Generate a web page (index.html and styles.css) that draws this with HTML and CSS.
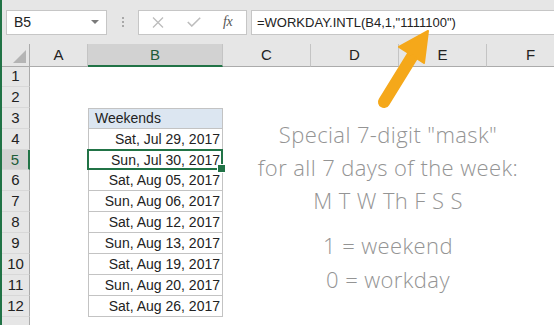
FILE: index.html
```html
<!DOCTYPE html>
<html>
<head>
<meta charset="utf-8">
<link rel="stylesheet" href="styles.css">
</head>
<body>
<div class="app">
  <div class="toolbar">
    <div class="namebox"><span>B5</span><span class="caret"></span></div>
    <div class="grip"><i></i><i></i><i></i></div>
    <div class="fxbox">
      <svg class="ico-x" width="12" height="11" viewBox="0 0 12 11"><path d="M1 0.5 L11 10.5 M11 0.5 L1 10.5" stroke="#bdbdbd" stroke-width="1.3" fill="none"/></svg>
      <svg class="ico-ok" width="14" height="10" viewBox="0 0 14 10"><path d="M0.8 5 L4.8 9 L13.2 0.8" stroke="#bdbdbd" stroke-width="1.6" fill="none"/></svg>
      <span class="fx">fx</span>
    </div>
    <div class="formula">=WORKDAY.INTL(B4,1,"1111100")</div>
  </div>
  <div class="hdr">
    <div class="corner"><span class="tri"></span></div>
    <div class="ch">A</div>
    <div class="ch sel">B</div>
    <div class="ch">C</div>
    <div class="ch">D</div>
    <div class="ch">E</div>
    <div class="ch">F</div>
  </div>
  <div class="sheet">
    <div class="rh">1</div><div></div><div></div><div></div><div></div><div></div><div></div>
    <div class="rh">2</div><div></div><div></div><div></div><div></div><div></div><div></div>
    <div class="rh">3</div><div></div><div class="c th">Weekends</div><div></div><div></div><div></div><div></div>
    <div class="rh">4</div><div></div><div class="c">Sat, Jul 29, 2017</div><div></div><div></div><div></div><div></div>
    <div class="rh sel">5</div><div></div><div class="c active">Sun, Jul 30, 2017</div><div></div><div></div><div></div><div></div>
    <div class="rh">6</div><div></div><div class="c">Sat, Aug 05, 2017</div><div></div><div></div><div></div><div></div>
    <div class="rh">7</div><div></div><div class="c">Sun, Aug 06, 2017</div><div></div><div></div><div></div><div></div>
    <div class="rh">8</div><div></div><div class="c">Sat, Aug 12, 2017</div><div></div><div></div><div></div><div></div>
    <div class="rh">9</div><div></div><div class="c">Sun, Aug 13, 2017</div><div></div><div></div><div></div><div></div>
    <div class="rh">10</div><div></div><div class="c">Sat, Aug 19, 2017</div><div></div><div></div><div></div><div></div>
    <div class="rh">11</div><div></div><div class="c">Sun, Aug 20, 2017</div><div></div><div></div><div></div><div></div>
    <div class="rh">12</div><div></div><div class="c">Sat, Aug 26, 2017</div><div></div><div></div><div></div><div></div>
    <div class="rh last"></div><div></div><div></div><div></div><div></div><div></div><div></div>
  </div>
  <div class="note">
    <p class="block1">Special 7-digit "mask"<br>for all 7 days of the week:<br>M T W Th F S S</p>
    <p class="block2">1 = weekend<br>0 = workday</p>
  </div>
  <svg class="arrow" width="554" height="325" viewBox="0 0 554 325">
    <line x1="384" y1="102" x2="413" y2="55" stroke="#f5a81a" stroke-width="12" stroke-linecap="round"/>
    <polygon points="428,31 399,47 424,63" fill="#f5a81a" stroke="#f5a81a" stroke-width="2" stroke-linejoin="round"/>
  </svg>
</div>
</body>
</html>
```
FILE: styles.css
```css
* { box-sizing: border-box; margin: 0; padding: 0; }
html, body { width: 554px; height: 325px; overflow: hidden; background: #fff; }
body { font-family: "Liberation Sans", Arial, sans-serif; color: #222; }

.app { position: relative; height: 325px; border-left: 2px solid #217346; overflow: hidden; }

.toolbar { height: 44px; background: #e6e6e6; display: flex; align-items: center; padding-left: 4px; }
.namebox { width: 101px; height: 25px; background: #fff; border: 1px solid #c6c6c6; display: flex; align-items: center; justify-content: space-between; padding: 0 7px 0 7px; font-size: 14px; }
.caret { width: 0; height: 0; border-left: 4px solid transparent; border-right: 4px solid transparent; border-top: 4px solid #7a7a7a; }
.grip { width: 31px; display: flex; flex-direction: column; align-items: center; gap: 2px; }
.grip i { width: 2px; height: 2px; background: #a8a8a8; }
.fxbox { width: 109px; height: 25px; background: #fff; border: 1px solid #c6c6c6; display: flex; align-items: center; }
.ico-x { margin-left: 13px; }
.ico-ok { margin-left: 23px; }
.fx { margin-left: 22px; font-family: "Liberation Serif", serif; font-style: italic; font-size: 14px; color: #555; letter-spacing: -0.5px; }
.formula { margin-left: 4px; flex: 1; height: 25px; background: #fff; border: 1px solid #c6c6c6; border-right: 0; padding-left: 5px; font-size: 13px; line-height: 23px; white-space: nowrap; }

.hdr { display: grid; grid-template-columns: 28px 58px 135px 88px 88px 88px 88px; height: 22px; background: #e6e6e6; }
.corner, .ch { border-bottom: 1px solid #ababab; border-right: 1px solid #c4c4c4; }
.corner { position: relative; border-right-color: #ababab; }
.tri { position: absolute; right: 3px; bottom: 3px; width: 0; height: 0; border-left: 13px solid transparent; border-bottom: 13px solid #b4b4b4; }
.ch { font-size: 15px; text-align: center; line-height: 21px; }
.ch.sel { background: #d2d2d2; border-bottom: 2px solid #217346; color: #1d5c38; }

.sheet { display: grid; grid-template-columns: 28px 58px 135px 88px 88px 88px 88px; grid-auto-rows: 20.9px; }
.rh { background: #e6e6e6; border-right: 1px solid #ababab; border-bottom: 1px solid #d8d8d8; font-size: 15px; text-align: center; line-height: 20px; }
.rh.sel { background: #d2d2d2; border-right: 2px solid #217346; color: #1d5c38; }

.c { position: relative; border: 1px solid #c3c3c3; border-top: 0; font-size: 14px; text-align: right; padding-right: 2px; line-height: 20px; white-space: nowrap; }
.c.th { border-top: 1px solid #c3c3c3; background: #dce6f1; text-align: left; padding-left: 6px; line-height: 19px; }
.c.active { z-index: 2; }
.c.active::after { content: ""; position: absolute; left: -2px; top: -1px; right: -1px; bottom: -1px; border: 2px solid #217346; }
.c.active::before { content: ""; position: absolute; right: -4px; bottom: -4px; width: 7px; height: 7px; background: #217346; border: 1px solid #fff; z-index: 3; }

.note { position: absolute; left: 226px; top: 118px; width: 320px; text-align: center; font-family: "Open Sans", "DejaVu Sans", sans-serif; font-weight: 300; font-size: 22px; letter-spacing: 0.4px; color: #949494; white-space: nowrap; }
.block1 { line-height: 33px; }
.block2 { line-height: 34px; margin-top: 11px; }

.arrow { position: absolute; left: -2px; top: 0; pointer-events: none; }
```
